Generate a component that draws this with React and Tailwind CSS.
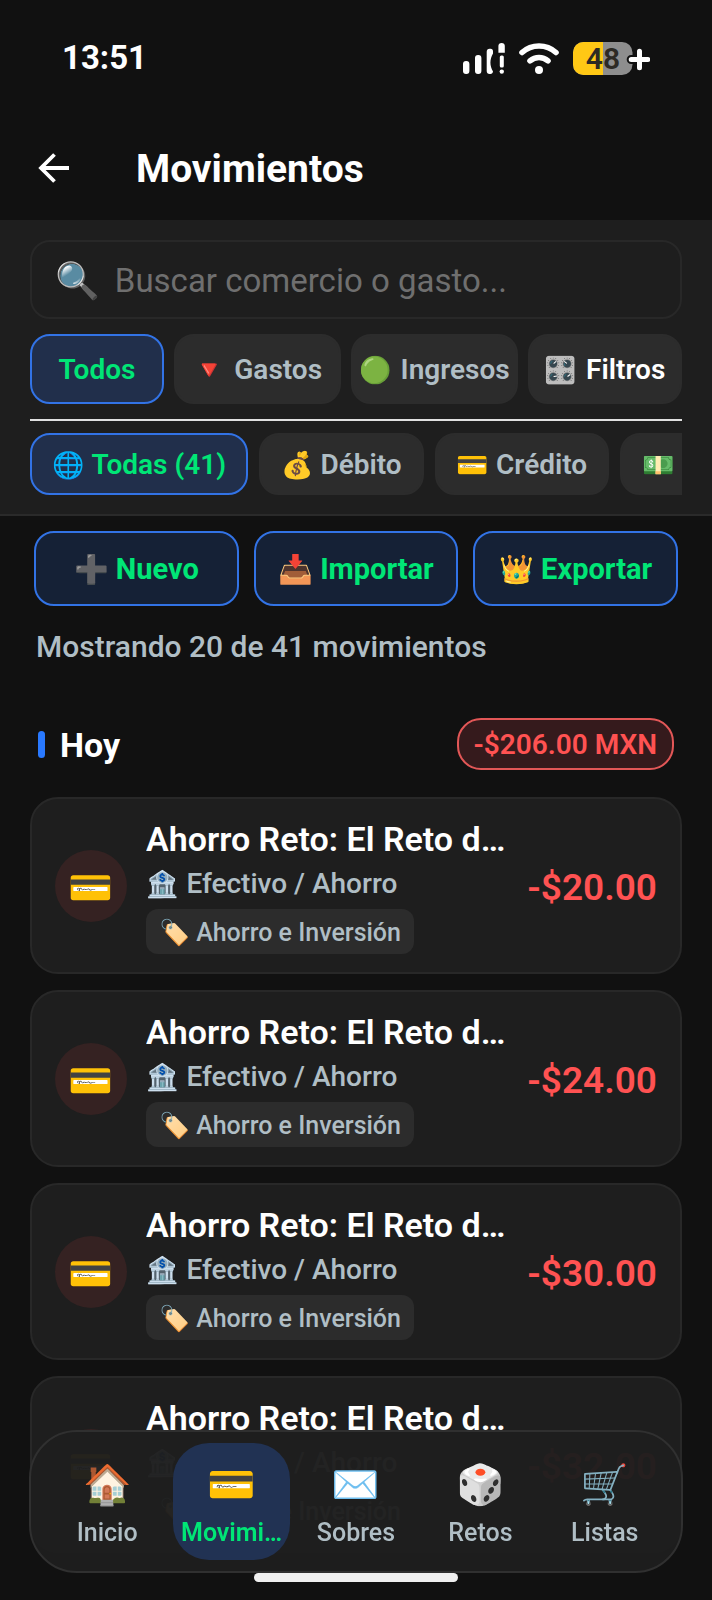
import clsx from 'clsx';

const TYPE_FILTERS = [
  { id: 'todos', label: 'Todos', active: true },
  { id: 'gastos', icon: '🔻', label: 'Gastos' },
  { id: 'ingresos', icon: '🟢', label: 'Ingresos' },
  { id: 'filtros', icon: '🎛️', label: 'Filtros', strong: true },
];

const ACCOUNT_FILTERS = [
  { id: 'todas', icon: '🌐', label: 'Todas (41)', active: true },
  { id: 'debito', icon: '💰', label: 'Débito' },
  { id: 'credito', icon: '💳', label: 'Crédito' },
  { id: 'efectivo', icon: '💵', label: 'Efectivo' },
];

const ACTIONS = [
  { id: 'nuevo', icon: '➕', label: 'Nuevo' },
  { id: 'importar', icon: '📥', label: 'Importar' },
  { id: 'exportar', icon: '👑', label: 'Exportar' },
];

const MOVEMENTS = [
  { id: 1, title: 'Ahorro Reto: El Reto d…', amount: '-$20.00' },
  { id: 2, title: 'Ahorro Reto: El Reto d…', amount: '-$24.00' },
  { id: 3, title: 'Ahorro Reto: El Reto d…', amount: '-$30.00' },
  { id: 4, title: 'Ahorro Reto: El Reto d…', amount: '-$32.00' },
];

const TABS = [
  { id: 'inicio', icon: '🏠', label: 'Inicio' },
  { id: 'movimientos', icon: '💳', label: 'Movimi…', active: true },
  { id: 'sobres', icon: '✉️', label: 'Sobres' },
  { id: 'retos', icon: '🎲', label: 'Retos' },
  { id: 'listas', icon: '🛒', label: 'Listas' },
];

function StatusBar() {
  return (
    <div className="flex h-[116px] items-center justify-between px-[62px]">
      <span className="text-[33px] font-bold">13:51</span>
      <div className="flex items-center gap-[14px]">
        <svg width="42" height="31" viewBox="0 0 42 31" fill="#fff" aria-hidden="true">
          <rect x="0" y="18" width="6.4" height="13" rx="3" />
          <rect x="12" y="12" width="6.4" height="19" rx="3" />
          <path d="M26.6 5.7h1c1.6 0 2.4 1 2.4 2.6v2.2c-3.4 6-3.4 12 0 18c-.2 1.6-1 2.5-2.6 2.5h-.8c-1.8 0-2.9-1.2-2.9-3V8.7c0-1.8 1.1-3 2.9-3z" />
          <path d="M35.4 9.7V3c0-1.8 1.2-3 3.2-3s3.2 1.2 3.2 3v6.7z" />
          <rect x="36.8" y="12.4" width="4" height="12" rx="1.5" />
          <circle cx="38.8" cy="28.6" r="2.2" />
        </svg>
        <svg width="40" height="31" viewBox="0 0 40 31" fill="none" stroke="#fff" strokeWidth="5.6" strokeLinecap="round" aria-hidden="true">
          <path d="M3 9.5a25.5 25.5 0 0 1 34 0" />
          <path d="M11 17.8a14 14 0 0 1 18 0" />
          <circle cx="20" cy="27" r="4" fill="#fff" stroke="none" />
        </svg>
        <svg width="77" height="33" viewBox="0 0 77 33" aria-label="Batería 48">
          <rect width="59.5" height="33" rx="10.5" fill="#8e8e8e" />
          <path d="M30 0H10.5a10.5 10.5 0 0 0-10.5 10.5v12a10.5 10.5 0 0 0 10.5 10.5H30z" fill="#ffc815" />
          <text x="30" y="27" textAnchor="middle" fontSize="30" fontWeight="600" fill="#2d2a24">48</text>
          <path d="M66.5 9.2v16.6M58.2 17.5h16.6" stroke="#111111" strokeWidth="9" strokeLinecap="round" />
          <path d="M66.5 9.2v16.6M58.2 17.5h16.6" stroke="#fff" strokeWidth="5" strokeLinecap="round" />
        </svg>
      </div>
    </div>
  );
}

function Chip({ icon, label, active, strong, className }) {
  return (
    <button
      type="button"
      className={clsx(
        'flex items-center justify-center rounded-[20px] border-2 pt-[2px] text-[28px] font-semibold whitespace-nowrap',
        active && 'border-[#3273e6] bg-[#212f4b] text-[#00e676]',
        !active && 'border-[#2c2c2c] bg-[#2c2c2c]',
        !active && (strong ? 'text-white' : 'text-[#b0bec5]'),
        className
      )}
    >
      {icon && <span className="text-[26px]">{icon}</span>}
      <span>{label}</span>
    </button>
  );
}

function MovementCard({ title, amount }) {
  return (
    <li className="flex items-center rounded-[28px] border-2 border-[#282828] bg-[#1e1e1e] px-[23px] py-[18px]">
      <div className="flex size-[72px] shrink-0 items-center justify-center rounded-full bg-[#352222] pt-1 text-[36px]">💳</div>
      <div className="ml-[19px] min-w-0 flex-1">
        <h3 className="truncate text-[34px] leading-[44px] font-semibold">{title}</h3>
        <p className="mt-[3px] flex items-center gap-[8px] text-[28px] leading-[40px] font-medium text-[#b0bec5]">
          <span className="text-[26px]">🏦</span>Efectivo / Ahorro
        </p>
        <span className="mt-[5px] inline-flex h-[45px] items-center gap-[6px] rounded-xl bg-[#2c2c2c] px-[13px] pt-[2px] align-top text-[25px] font-medium text-[#b0bec5]">
          <span>🏷️</span>Ahorro e Inversión
        </span>
      </div>
      <span className="shrink-0 pt-1 text-[37px] font-semibold text-[#ff5252]">{amount}</span>
    </li>
  );
}

export default function App() {
  return (
    <div className="min-h-screen bg-[#111111] pb-11 font-[Roboto,'Noto_Color_Emoji',sans-serif] text-white">
      <StatusBar />

      <header className="flex h-[104px] items-center gap-[67px] px-[38px]">
        <button type="button" aria-label="Volver">
          <svg width="31" height="30" viewBox="0 0 31 30" fill="none" stroke="#fff" strokeWidth="3.8" aria-hidden="true">
            <path d="M31 15H3M16.5 1.5L3 15l13.5 13.5" />
          </svg>
        </button>
        <h1 className="pt-[2px] text-[39px] font-bold">Movimientos</h1>
      </header>

      <section className="border-b-2 border-[#2a2a2a] bg-[#1e1e1e] px-[30px] pt-5 pb-[19px]">
        <div className="flex h-[79px] items-center gap-[15px] rounded-[20px] border-2 border-[#282828] px-[23px] pt-[2px]">
          <label htmlFor="buscar" className="text-[36px]">🔍</label>
          <input
            id="buscar"
            type="text"
            placeholder="Buscar comercio o gasto..."
            className="min-w-0 flex-1 bg-transparent text-[33px] text-white placeholder-[#6f6f6f] outline-none"
          />
        </div>

        <div className="mt-[15px] grid grid-cols-[134fr_167fr_167fr_154fr] gap-[10px]">
          {TYPE_FILTERS.map(({ id, ...chip }) => (
            <Chip key={id} {...chip} className="h-[70px] gap-[9px]" />
          ))}
        </div>

        <hr className="mt-[15px] border-t-2 border-[#e0e0e0]" />

        <div className="mt-3 flex gap-[11px] overflow-hidden">
          {ACCOUNT_FILTERS.map(({ id, ...chip }) => (
            <Chip key={id} {...chip} className="h-[62px] shrink-0 gap-[7px] px-5" />
          ))}
        </div>
      </section>

      <main>
        <div className="mt-[15px] grid grid-cols-3 gap-[15px] px-[34px]">
          {ACTIONS.map((a) => (
            <button
              key={a.id}
              type="button"
              className="flex h-[75px] items-center justify-center gap-[7px] rounded-[20px] border-2 border-[#3273e6] bg-[#152136] pt-[2px] text-[29px] font-bold text-[#00e676]"
            >
              <span className="text-[28px]">{a.icon}</span>
              <span>{a.label}</span>
            </button>
          ))}
        </div>

        <p className="mt-4 px-9 text-[30px] leading-[50px] font-medium text-[#b0bec5]">
          Mostrando 20 de 41 movimientos
        </p>

        <div className="mt-[46px] flex h-[52px] items-center justify-between px-[38px]">
          <h2 className="flex items-center gap-[15px] text-[34px] leading-[52px] font-bold">
            <span className="h-[27px] w-[7px] rounded-full bg-[#2979ff]" />
            <span className="pt-[2px]">Hoy</span>
          </h2>
          <span className="flex h-[52px] items-center rounded-[24px] border-2 border-[#e25757] bg-[#351a1c] px-[15px] pt-[2px] text-[28px] font-semibold text-[#ff5252]">
            -$206.00 MXN
          </span>
        </div>

        <ul className="mt-[27px] flex flex-col gap-4 px-[30px]">
          {MOVEMENTS.map((m) => (
            <MovementCard key={m.id} title={m.title} amount={m.amount} />
          ))}
        </ul>
      </main>

      <nav className="fixed inset-x-[29px] bottom-[27px] grid grid-cols-5 gap-2 rounded-[48px] border-2 border-[#303030] bg-[#1e1e1e]/97 px-[18px] py-[11px]">
        {TABS.map((tab) => (
          <a
            key={tab.id}
            href={`#${tab.id}`}
            className={clsx(
              'flex h-[117px] flex-col items-center gap-[6px] rounded-[36px] pt-[18px]',
              tab.active ? 'bg-[#213253] font-semibold text-[#00e676]' : 'font-medium text-[#b0bec5]'
            )}
          >
            <span className="text-[39px] leading-[48px]">{tab.icon}</span>
            <span className="text-[25px] leading-[36px]">{tab.label}</span>
          </a>
        ))}
      </nav>
      <div className="fixed bottom-[18px] left-1/2 h-[9px] w-[204px] -translate-x-1/2 rounded-full bg-[#f0f0f0]" />
    </div>
  );
}
